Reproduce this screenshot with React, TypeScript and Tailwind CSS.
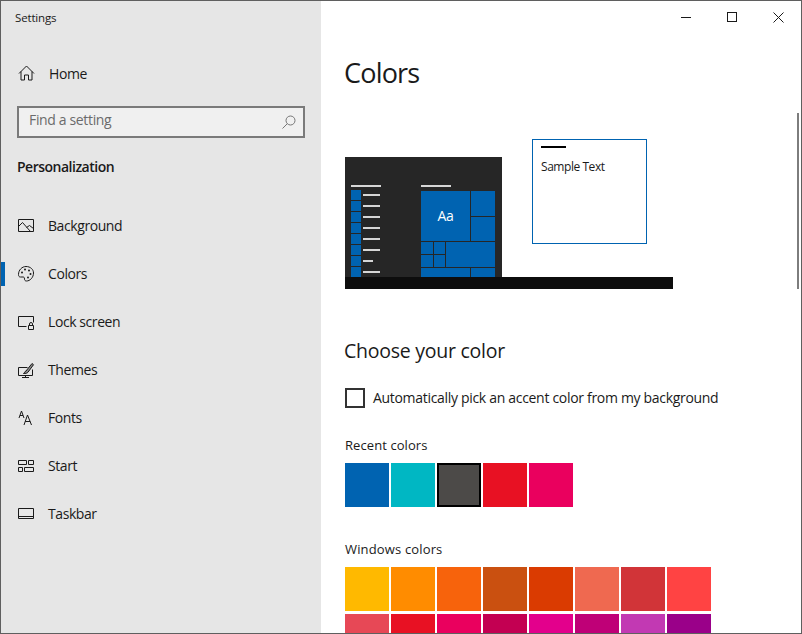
const F = "font-['Open_Sans','Noto_Sans',sans-serif]";

const Ico = ({ children }: { children: React.ReactNode }) => (
  <svg width="18" height="18" viewBox="0 0 18 18" fill="none" stroke="#1a1a1a" strokeWidth="1" className="shrink-0">
    {children}
  </svg>
);

const nav: { label: string; icon: React.ReactNode; active?: boolean }[] = [
  {
    label: "Background",
    icon: (
      <Ico>
        <path d="M1.500 2.500h15v12h-15z" />
        <path d="M1.500 9.500l4-4 8 9M9.500 10.500l3-2 4 3" />
      </Ico>
    ),
  },
  {
    label: "Colors",
    active: true,
    icon: (
      <Ico>
        <path d="M9 1.500c4.500 0 7.500 3 7.500 6.500 0 4.500-3.500 8-7 8-1.500 0-2-1-2-2 0-1.500-.5-2-1.500-2H3.500c-1.500 0-2-1-2-2.500C1.500 5 5 1.500 9 1.500z" />
        <circle cx="5" cy="7.500" r="1" fill="#1a1a1a" stroke="none" />
        <circle cx="8" cy="4.500" r="1" fill="#1a1a1a" stroke="none" />
        <circle cx="12" cy="5.500" r="1" fill="#1a1a1a" stroke="none" />
        <circle cx="13.500" cy="9" r="1" fill="#1a1a1a" stroke="none" />
        <circle cx="11" cy="12.500" r="1" fill="#1a1a1a" stroke="none" />
      </Ico>
    ),
  },
  {
    label: "Lock screen",
    icon: (
      <Ico>
        <path d="M9.500 13.500h-8v-10h15v6" />
        <path d="M11.500 12.500h5v4h-5zM12.500 12.500v-1.500a1.500 1.500 0 0 1 3 0v1.500" />
      </Ico>
    ),
  },
  {
    label: "Themes",
    icon: (
      <Ico>
        <path d="M10.500 6.500h-9v8h14v-6M8.500 14.500v2M5 16.500h7" />
        <path d="M6.500 12.500c1-.3 1-2 2.500-2.500l6-7.500 1.500 1.200-5.500 7.500c-.7 1-2.500 1.300-4.500 1.300z" fill="#1a1a1a" fillOpacity="0.45" />
      </Ico>
    ),
  },
  {
    label: "Fonts",
    icon: (
      <Ico>
        <path d="M2 9l2.500-7L7 9M3 6.500h3" />
        <path d="M7 16l3.500-10L14.500 16M8.200 12.500h5" />
      </Ico>
    ),
  },
  {
    label: "Start",
    icon: (
      <Ico>
        <path d="M1.500 3.500h8v4h-8zM11.500 3.500h5v4h-5zM1.500 10.500h4v4h-4zM7.500 10.500h9v4h-9z" />
      </Ico>
    ),
  },
  {
    label: "Taskbar",
    icon: (
      <Ico>
        <path d="M1.500 3.500h15v10h-15zM1.500 11.500h15" />
      </Ico>
    ),
  },
];

const recent = ["bg-[#0063b1]", "bg-[#00b7c3]", "bg-[#4c4a48]", "bg-[#e81123]", "bg-[#ea005e]"];
const row1 = ["bg-[#ffb900]", "bg-[#ff8c00]", "bg-[#f7630c]", "bg-[#ca5010]", "bg-[#da3b01]", "bg-[#ef6950]", "bg-[#d13438]", "bg-[#ff4343]"];
const row2 = ["bg-[#e74856]", "bg-[#e81123]", "bg-[#ea005e]", "bg-[#c30052]", "bg-[#e3008c]", "bg-[#bf0077]", "bg-[#c239b3]", "bg-[#9a0089]"];
const lines = [17, 17, 17, 17, 17, 17, 10, 17];

const Tile = ({ className = "" }: { className?: string }) => <div className={`bg-[#0063b1] ${className}`} />;

export default function App() {
  return (
    <div className={`${F} w-[802px] h-[634px] border border-[#5f5f5f] flex overflow-hidden bg-white text-[#1a1a1a] text-[14px] leading-none`}>
      {/* Sidebar */}
      <aside className="w-[320px] shrink-0 bg-[#e6e6e6] flex flex-col">
        <div className="h-[32px] pl-[14px] flex items-center text-[11.500px] tracking-[-0.15px] pt-[2px]">Settings</div>
        <div className="mt-[17px] h-[48px] pl-[16px] flex items-center gap-[14px]">
          <svg width="18" height="18" viewBox="0 0 18 18" fill="none" stroke="#1a1a1a" strokeWidth="1" className="shrink-0">
            <path d="M2 8.500L9.500 1 17 8.500M4 6.500V15h3.500v-5h4v5H15V6.500" />
          </svg>
          <span className="tracking-[-0.4px]">Home</span>
        </div>
        <div className="mt-[8px] mx-[16px] h-[32px] border-2 border-[#7a7a7a] bg-[#f0f0f0] flex items-center justify-between pl-[10px] pr-[6px] text-[#6b6b6b] tracking-[-0.35px]">
          <span className="pb-[4px]">Find a setting</span>
          <svg width="16" height="16" viewBox="0 0 16 16" fill="none" stroke="#767676" strokeWidth="1">
            <circle cx="9.500" cy="6.500" r="4.500" />
            <path d="M6.300 9.700L1.500 14.500" />
          </svg>
        </div>
        <div className="mt-[21px] pl-[16px] font-semibold tracking-[-0.5px] h-[16px] flex items-center">Personalization</div>
        <nav className="mt-[27px] flex flex-col">
          {nav.map((n) => (
            <div key={n.label} className="relative h-[48px] pl-[16px] flex items-center gap-[13px]">
              {n.active && <div className="absolute left-0 top-[12px] w-[4px] h-[24px] bg-[#0063b1]" />}
              {n.icon}
              <span className="tracking-[-0.42px]">{n.label}</span>
            </div>
          ))}
        </nav>
      </aside>

      {/* Main */}
      <main className="relative flex-1 min-w-0 pl-[24px] flex flex-col">
        <div className="absolute top-0 right-0 flex h-[32px]">
          <div className="w-[46px] flex items-center justify-center">
            <div className="w-[10px] h-[1px] bg-[#1a1a1a]" />
          </div>
          <div className="w-[46px] flex items-center justify-center">
            <div className="w-[10px] h-[10px] border border-[#1a1a1a]" />
          </div>
          <div className="w-[46px] flex items-center justify-center">
            <svg width="11" height="11" viewBox="0 0 11 11" stroke="#1a1a1a" strokeWidth="1">
              <path d="M.5.500l10 10M10.500.500l-10 10" />
            </svg>
          </div>
        </div>
        <div className="absolute right-[2px] top-[112px] h-[176px] w-[2px] bg-[#7d7d7d]" />

        <h1 className="mt-[56px] -ml-[1px] text-[27px] leading-[32px] tracking-[-0.8px] h-[32px]">Colors</h1>

        {/* Preview */}
        <div className="relative mt-[68px] w-[328px] h-[132px] flex flex-col">
          <div className="w-[157px] h-[120px] bg-[#262626] overflow-hidden flex pt-[28px] pl-[6px]">
            <div className="w-[70px] shrink-0 flex flex-col">
              <div className="w-[30px] h-[2px] shrink-0 bg-[#d6d6d6]" />
              <div className="mt-[3px] flex flex-col gap-[1px]">
                {lines.map((w, i) => (
                  <div key={i} className="flex items-center gap-[2px] h-[10px]">
                    <Tile className="w-[10px] h-[10px]" />
                    <div className="h-[2px] bg-[#d6d6d6]" style={{ width: w }} />
                  </div>
                ))}
              </div>
            </div>
            <div className="w-[74px] shrink-0 flex flex-col">
              <div className="w-[30px] h-[2px] shrink-0 bg-[#d6d6d6]" />
              <div className="mt-[4px] grid grid-cols-[12px_11px_24px_24px] grid-rows-[25px_24px_12px_12px_9px] gap-[1px]">
                <div className="col-span-3 row-span-2 bg-[#0063b1] flex items-center justify-center text-white text-[14px] tracking-[-0.3px]">Aa</div>
                <Tile />
                <Tile />
                <Tile />
                <Tile />
                <Tile className="col-span-2 row-span-2" />
                <Tile />
                <Tile />
                <Tile className="col-span-3" />
                <Tile />
              </div>
            </div>
          </div>
          <div className="w-[328px] h-[12px] bg-[#0d0d0d]" />
          <div className="absolute left-[187px] top-[-18px] w-[115px] h-[105px] border border-[#0063b1] bg-white pl-[8px] pt-[6px]">
            <div className="w-[25px] h-[2px] bg-black" />
            <div className="mt-[12px] text-[12px] leading-[14px] tracking-[-0.45px]">Sample Text</div>
          </div>
        </div>

        <h2 className="mt-[51px] -ml-[1px] text-[19.500px] leading-[22px] h-[22px] tracking-[-0.25px]">Choose your color</h2>

        <div className="mt-[26px] flex items-center gap-[8px]">
          <div className="w-[20px] h-[20px] border-2 border-[#333333]" />
          <span className="tracking-[-0.31px]">Automatically pick an accent color from my background</span>
        </div>

        <div className="mt-[29px] text-[13px] leading-[16px] tracking-[0.08px]">Recent colors</div>
        <div className="mt-[10px] flex gap-[2px]">
          {recent.map((c, i) => (
            <div key={c} className={`w-[44px] h-[44px] ${c} ${i === 2 ? "border-2 border-black" : ""}`} />
          ))}
        </div>

        <div className="mt-[34px] text-[13px] leading-[16px] tracking-[0.15px]">Windows colors</div>
        <div className="mt-[10px] flex gap-[2px]">
          {row1.map((c) => (
            <div key={c} className={`w-[44px] h-[44px] shrink-0 ${c}`} />
          ))}
        </div>
        <div className="mt-[3px] flex gap-[2px]">
          {row2.map((c) => (
            <div key={c} className={`w-[44px] h-[44px] shrink-0 ${c}`} />
          ))}
        </div>
      </main>
    </div>
  );
}
